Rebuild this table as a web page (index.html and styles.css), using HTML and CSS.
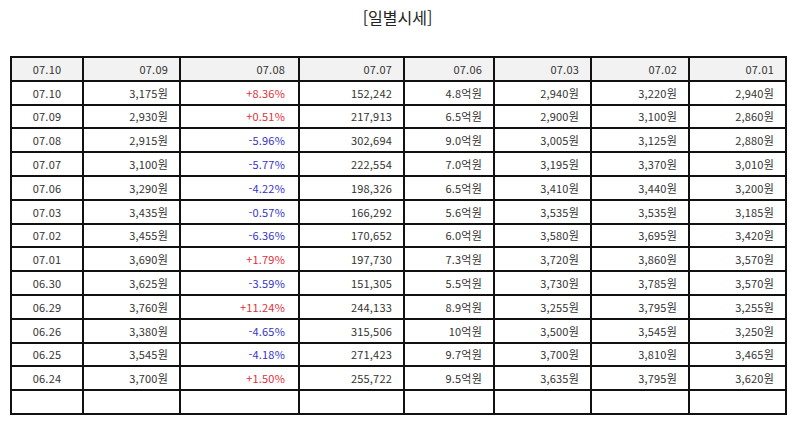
FILE: index.html
```html
<!DOCTYPE html>
<html lang="ko">
<head>
<meta charset="utf-8">
<link rel="stylesheet" href="styles.css">
</head>
<body>
<div class="page">
  <h1 class="title">[일별시세]</h1>
  <table class="prices">
    <colgroup>
      <col class="c1"><col class="c2"><col class="c3"><col class="c4"><col class="c5"><col class="c6"><col class="c7"><col class="c8">
    </colgroup>
    <thead>
      <tr><th class="date">07.10</th><th>07.09</th><th class="pct">07.08</th><th>07.07</th><th>07.06</th><th>07.03</th><th>07.02</th><th>07.01</th></tr>
    </thead>
    <tbody>
      <tr><td class="date">07.10</td><td>3,175원</td><td class="pct up">+8.36%</td><td>152,242</td><td>4.8억원</td><td>2,940원</td><td>3,220원</td><td>2,940원</td></tr>
      <tr><td class="date">07.09</td><td>2,930원</td><td class="pct up">+0.51%</td><td>217,913</td><td>6.5억원</td><td>2,900원</td><td>3,100원</td><td>2,860원</td></tr>
      <tr><td class="date">07.08</td><td>2,915원</td><td class="pct down">-5.96%</td><td>302,694</td><td>9.0억원</td><td>3,005원</td><td>3,125원</td><td>2,880원</td></tr>
      <tr><td class="date">07.07</td><td>3,100원</td><td class="pct down">-5.77%</td><td>222,554</td><td>7.0억원</td><td>3,195원</td><td>3,370원</td><td>3,010원</td></tr>
      <tr><td class="date">07.06</td><td>3,290원</td><td class="pct down">-4.22%</td><td>198,326</td><td>6.5억원</td><td>3,410원</td><td>3,440원</td><td>3,200원</td></tr>
      <tr><td class="date">07.03</td><td>3,435원</td><td class="pct down">-0.57%</td><td>166,292</td><td>5.6억원</td><td>3,535원</td><td>3,535원</td><td>3,185원</td></tr>
      <tr><td class="date">07.02</td><td>3,455원</td><td class="pct down">-6.36%</td><td>170,652</td><td>6.0억원</td><td>3,580원</td><td>3,695원</td><td>3,420원</td></tr>
      <tr><td class="date">07.01</td><td>3,690원</td><td class="pct up">+1.79%</td><td>197,730</td><td>7.3억원</td><td>3,720원</td><td>3,860원</td><td>3,570원</td></tr>
      <tr><td class="date">06.30</td><td>3,625원</td><td class="pct down">-3.59%</td><td>151,305</td><td>5.5억원</td><td>3,730원</td><td>3,785원</td><td>3,570원</td></tr>
      <tr><td class="date">06.29</td><td>3,760원</td><td class="pct up">+11.24%</td><td>244,133</td><td>8.9억원</td><td>3,255원</td><td>3,795원</td><td>3,255원</td></tr>
      <tr><td class="date">06.26</td><td>3,380원</td><td class="pct down">-4.65%</td><td>315,506</td><td>10억원</td><td>3,500원</td><td>3,545원</td><td>3,250원</td></tr>
      <tr><td class="date">06.25</td><td>3,545원</td><td class="pct down">-4.18%</td><td>271,423</td><td>9.7억원</td><td>3,700원</td><td>3,810원</td><td>3,465원</td></tr>
      <tr><td class="date">06.24</td><td>3,700원</td><td class="pct up">+1.50%</td><td>255,722</td><td>9.5억원</td><td>3,635원</td><td>3,795원</td><td>3,620원</td></tr>
      <tr><td class="date"></td><td></td><td class="pct"></td><td></td><td></td><td></td><td></td><td></td></tr>
    </tbody>
  </table>
</div>
</body>
</html>
```
FILE: styles.css
```css
html, body {
  margin: 0;
  padding: 0;
  background: #fff;
}
.page {
  padding: 0 9px 0 10px;
  font-family: "Noto Sans CJK KR", "Noto Sans", sans-serif;
  color: #333;
}
.title {
  margin: 0;
  padding-top: 6px;
  font-size: 16px;
  line-height: 22px;
  font-weight: normal;
  text-align: center;
  color: #222;
}
.prices {
  margin-top: 28px;
  width: 775px;
  table-layout: fixed;
  border-collapse: collapse;
  font-size: 11px;
}
.c1 { width: 72px; }
.c2 { width: 97px; }
.c3 { width: 119px; }
.c4 { width: 105px; }
.c5 { width: 90px; }
.c6 { width: 97px; }
.c7 { width: 98px; }
.c8 { width: 97px; }
.prices tr {
  height: 23.8px;
}
.prices th, .prices td {
  border: 2px solid #111;
  padding: 0 11px 0 4px;
  text-align: right;
  font-weight: normal;
  line-height: 14px;
  color: #333;
  letter-spacing: 0.2px;
  white-space: nowrap;
}
.prices th {
  background: #f2f2f2;
}
.prices .date {
  text-align: center;
  padding: 0;
}
.prices .pct {
  padding-right: 13px;
}
.prices .up { color: #e0303a; }
.prices .down { color: #3434c6; }
```
